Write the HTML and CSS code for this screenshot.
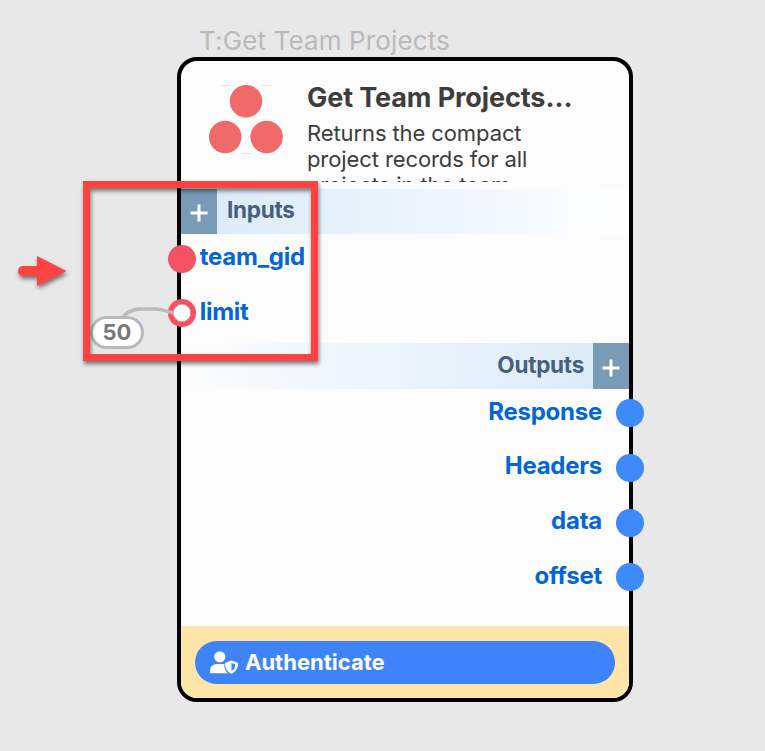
FILE: index.html
```html
<!DOCTYPE html>
<html lang="en">
<head>
<meta charset="utf-8">
<title>Get Team Projects</title>
<link rel="stylesheet" href="styles.css">
</head>
<body>
<main class="canvas">
  <div class="node-name"><span>T:Get Team Projects</span></div>
  <article class="node">
    <header class="head">
      <svg class="logo" width="74" height="70" viewBox="0 0 74 70">
        <g fill="#f06a6a"><circle cx="37" cy="16.3" r="16.2"/><circle cx="16.2" cy="52" r="16.2"/><circle cx="57.6" cy="52" r="16.2"/></g>
        <path d="M12 .5h9M53 .5h9M33 68.5h9" stroke="#f7dcdc" stroke-width="1"/>
      </svg>
      <div class="about">
        <h1><span>Get Team Projects…</span></h1>
        <p><span>Returns the compact</span><br><span>project records for all</span><br><span>projects in the team</span></p>
      </div>
    </header>
    <div class="bar bar-in">
      <button class="add"><svg width="18" height="18" viewBox="0 0 18 18"><path d="M9 .5v17M.5 9h17"/></svg></button>
      <span class="bar-title">Inputs</span>
    </div>
    <ul class="ports inputs">
      <li><i class="dot"></i><span>team_gid</span></li>
      <li><i class="dot hollow"></i><span>limit</span></li>
    </ul>
    <div class="bar bar-out">
      <span class="bar-title">Outputs</span>
      <button class="add"><svg width="18" height="18" viewBox="0 0 18 18"><path d="M9 .5v17M.5 9h17"/></svg></button>
    </div>
    <ul class="ports outputs">
      <li><span>Response</span><i class="dot"></i></li>
      <li><span>Headers</span><i class="dot"></i></li>
      <li><span>data</span><i class="dot"></i></li>
      <li><span>offset</span><i class="dot"></i></li>
    </ul>
    <footer class="foot">
      <button class="auth">
        <svg width="28" height="23" viewBox="0 0 28 23" fill="#fff">
          <circle cx="9.8" cy="5.8" r="5.6"/>
          <path d="M6.8 13h6.4c.4 0 .8.1 1.2.2-.3 3.6.9 7 3.5 9.1H1.2C.5 22.300 0 21.800 0 21.200v-1.400C0 16 3 13 6.800 13z"/>
          <path fill-rule="evenodd" d="M21.500 9.400l5.700 2.100c.500.200.800.600.800 1.100 0 4.500-2.100 8.300-6.100 10-.300.100-.600.100-.900 0-4-1.700-6-5.500-6-10 0-.500.300-.900.800-1.100zM21.500 12v8.100c2.500-1.300 3.800-3.700 3.900-6.700z"/>
        </svg>
        <span>Authenticate</span>
      </button>
    </footer>
  </article>
  <svg class="wire" width="56" height="16" viewBox="0 0 56 16"><path d="M1 14C7 7 12 3 22 3H36C43 3 47 5 54 7"/></svg>
  <div class="value"><span>50</span></div>
  <div class="highlight"></div>
  <svg class="arrow" width="62" height="46" viewBox="0 0 62 46"><path d="M9 17H23V7L52.500 22 23 37V27H9a5 5 0 0 1 0-10z"/></svg>
</main>
</body>
</html>
```
FILE: styles.css
```css
* { box-sizing: border-box; }

body {
  margin: 0;
  background: #e8e8e8;
  font-family: Inter, "Liberation Sans", sans-serif;
}

button { border: 0; padding: 0; font: inherit; }

.canvas {
  position: relative;
  height: 751px;
  padding: 25px 0 0 177px;
  overflow: hidden;
}

.node-name {
  height: 32px;
  padding-left: 22px;
  font-size: 26px;
  line-height: 32px;
  letter-spacing: .13px;
  color: #bababa;
  white-space: nowrap;
}

.node {
  display: flex;
  flex-direction: column;
  width: 456px;
  height: 645px;
  border: 4px solid #000;
  border-radius: 20px;
  background: #fcfcfc;
}

.head {
  display: flex;
  gap: 24px;
  height: 128px;
  padding: 20px 0 0 28px;
}

.logo { flex: none; margin-top: 4px; }

.about {
  height: 101px;
  padding-right: 16px;
  overflow: hidden;
  white-space: nowrap;
  color: #3d3d3d;
}

h1 {
  margin: 1px 0 6px;
  font-size: 27px;
  line-height: 32px;
  font-weight: 700;
  letter-spacing: -.1px;
}

p {
  margin: 0;
  font-size: 22px;
  line-height: 26px;
  letter-spacing: -.1px;
}

.bar {
  display: flex;
  align-items: stretch;
  height: 45px;
  flex: none;
}

.bar-in { background: linear-gradient(90deg, #d8eaf8, #eff6fd 60%, #fff); }

.bar-out {
  justify-content: flex-end;
  height: 46px;
  background: linear-gradient(270deg, #d8eaf8, #eff6fd 60%, #fcfcfc);
}

.add {
  display: flex;
  align-items: center;
  justify-content: center;
  width: 36px;
  padding-top: 3px;
  background: #799bb7;
}

.add path { stroke: #fff; stroke-width: 3; }

.bar-title {
  padding: 0 9px;
  font-size: 22.500px;
  line-height: 43px;
  font-weight: 700;
  letter-spacing: -.25px;
  color: #48607d;
}

.bar-in .bar-title { padding-left: 10px; line-height: 42px; }

.ports {
  display: flex;
  flex-direction: column;
  gap: 26.700px;
  margin: 0;
  padding: 10.500px 0 0;
  list-style: none;
  font-size: 24px;
  line-height: 24px;
  font-weight: 700;
  letter-spacing: -.25px;
  color: #0265d8;
}

.ports li {
  display: flex;
  align-items: center;
  height: 28px;
}

.ports span { margin-top: -3px; }

.inputs { height: 109px; }

.inputs li { gap: 4px; margin-left: -13.300px; }

.outputs { height: 237px; padding-top: 10.200px; }

.outputs li { gap: 14px; justify-content: flex-end; margin-right: -15px; }

.dot {
  flex: none;
  width: 28px;
  height: 28px;
  border-radius: 50%;
  background: #3f8afb;
}

.inputs .dot { background: #f55165; }

.inputs .hollow { border: 5px solid #f55165; background: #fff; box-shadow: inset 0 0 0 .5px #f55165; }

.foot {
  flex: 1;
  padding: 14.500px 14.500px 0 14px;
  border-radius: 0 0 16px 16px;
  background: #ffe6a8;
}

.auth {
  display: flex;
  align-items: center;
  gap: 7px;
  width: 100%;
  height: 43.500px;
  padding-left: 15px;
  border-radius: 22px;
  background: #3f83f9;
  font-size: 22px;
  font-weight: 700;
  color: #fff;
}

.wire { position: absolute; left: 119px; top: 306px; }

.wire path { fill: none; stroke: #bababa; stroke-width: 3.500; }

.value {
  position: absolute;
  left: 90px;
  top: 316px;
  width: 54px;
  height: 33px;
  border: 3px solid #bababa;
  border-radius: 17px;
  background: #fff;
  font-size: 22px;
  line-height: 27px;
  font-weight: 700;
  color: #777;
  text-align: center;
}

.highlight {
  position: absolute;
  left: 83px;
  top: 181px;
  width: 235px;
  height: 180px;
  border: 7px solid #ff4343;
  box-shadow: 1px 3px 4px rgba(0, 0, 0, .5), inset 1px 3px 4px rgba(0, 0, 0, .5);
}

.arrow {
  position: absolute;
  left: 14px;
  top: 249px;
  filter: drop-shadow(1px 3px 2px rgba(0, 0, 0, .5));
}

.arrow path { fill: #ff4343; }
```
